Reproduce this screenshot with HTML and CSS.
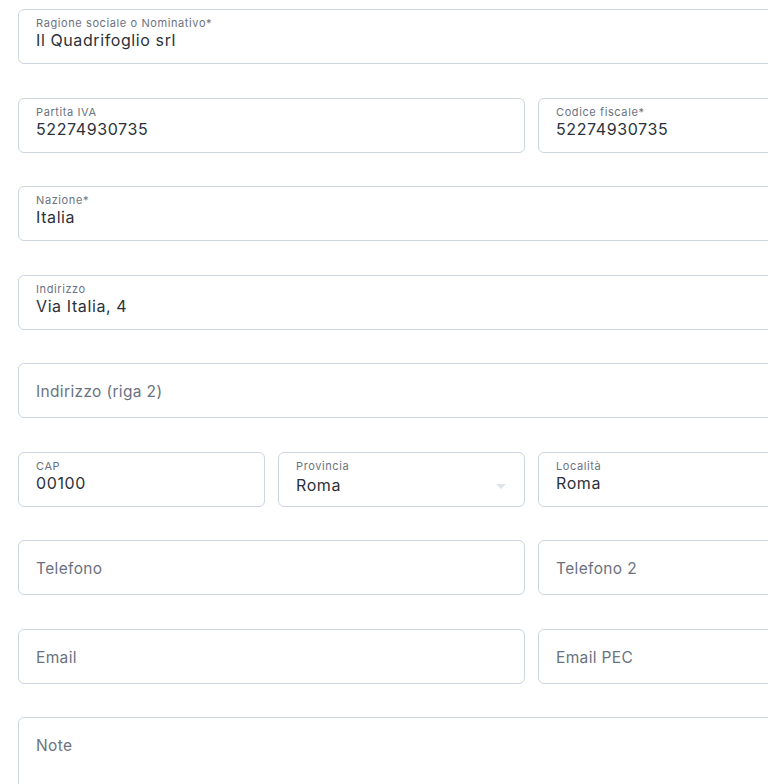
FILE: index.html
```html
<!DOCTYPE html>
<html lang="it">
<head>
<meta charset="utf-8">
<link rel="stylesheet" href="styles.css">
</head>
<body>
<div class="form">
  <div class="field span3"><span class="label">Ragione sociale o Nominativo*</span><span class="value">Il Quadrifoglio srl</span></div>
  <div class="field span2"><span class="label">Partita IVA</span><span class="value">52274930735</span></div>
  <div class="field"><span class="label">Codice fiscale*</span><span class="value">52274930735</span></div>
  <div class="field span3"><span class="label">Nazione*</span><span class="value">Italia</span></div>
  <div class="field span3"><span class="label">Indirizzo</span><span class="value">Via Italia, 4</span></div>
  <div class="field span3 empty"><span class="placeholder">Indirizzo (riga 2)</span></div>
  <div class="field"><span class="label">CAP</span><span class="value">00100</span></div>
  <div class="field select"><span class="label">Provincia</span><span class="value">Roma</span><span class="caret"></span></div>
  <div class="field"><span class="label">Località</span><span class="value">Roma</span></div>
  <div class="field span2 empty"><span class="placeholder">Telefono</span></div>
  <div class="field empty"><span class="placeholder">Telefono 2</span></div>
  <div class="field span2 empty"><span class="placeholder">Email</span></div>
  <div class="field empty"><span class="placeholder">Email PEC</span></div>
  <div class="field span3 empty note"><span class="placeholder">Note</span></div>
</div>
</body>
</html>
```
FILE: styles.css
```css
html, body {
  margin: 0;
  padding: 0;
  background: #ffffff;
  overflow: hidden;
}
body {
  width: 768px;
  height: 784px;
  font-family: Inter, "Noto Sans", sans-serif;
}
.form {
  display: grid;
  grid-template-columns: 246.5px 246.5px 246.5px;
  column-gap: 13.5px;
  row-gap: 33.5px;
  padding: 9px 0 0 18px;
  width: 766px;
}
.field {
  position: relative;
  box-sizing: border-box;
  height: 55px;
  border: 1px solid #cdd5df;
  border-radius: 6px;
  display: flex;
  flex-direction: column;
  padding: 6px 17px 0 17px;
  background: #fff;
}
.span2 { grid-column: span 2; }
.span3 { grid-column: span 3; }
.label {
  font-size: 11px;
  line-height: 14px;
  color: #6b7280;
  letter-spacing: 0.6px;
}
.value {
  margin-top: 0;
  font-size: 16px;
  line-height: 20px;
  color: #2b313c;
  letter-spacing: 0.6px;
}
.select .value {
  margin-top: 2px;
}
.empty {
  padding-top: 18px;
}
.placeholder {
  font-size: 15.5px;
  line-height: 20px;
  color: #6b7280;
  letter-spacing: 0.35px;
}
.note {
  height: 110px;
}
.caret {
  position: absolute;
  right: 18px;
  top: 31px;
  width: 0;
  height: 0;
  border-left: 5px solid transparent;
  border-right: 5px solid transparent;
  border-top: 5px solid #dfe4ea;
}
```
